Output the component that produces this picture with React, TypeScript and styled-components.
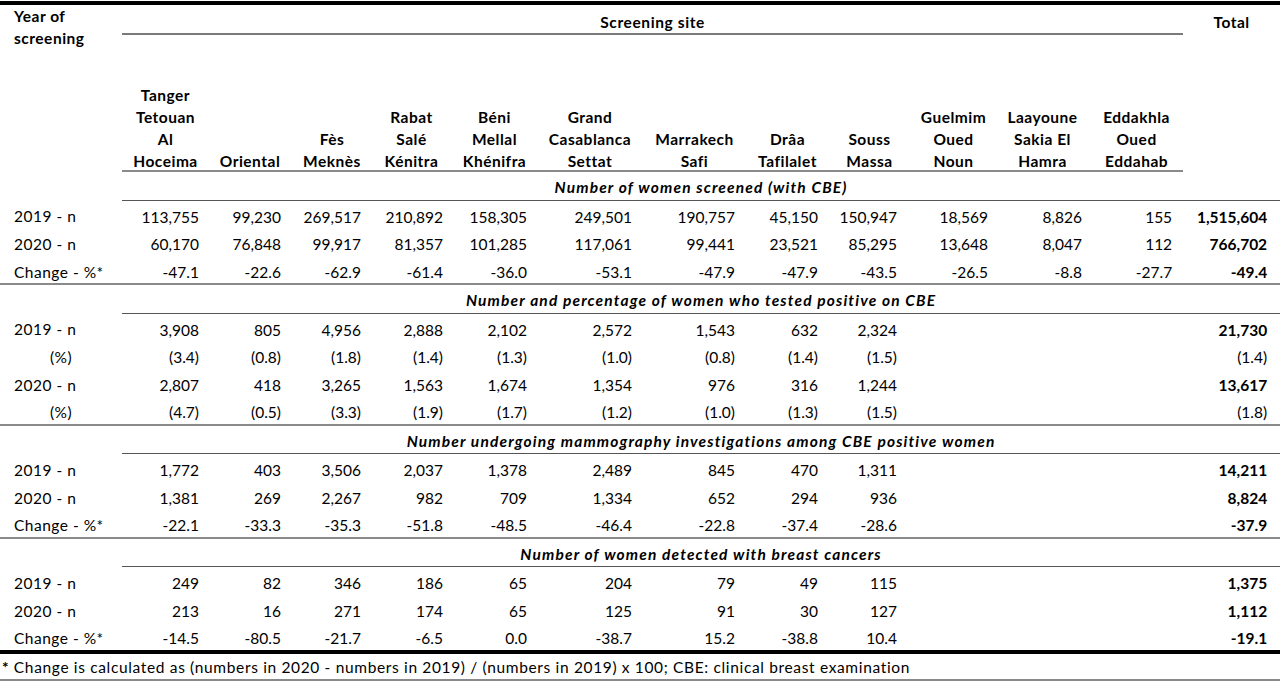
import React from 'react';
import styled, { createGlobalStyle, css } from 'styled-components';

const GlobalStyle = createGlobalStyle`
  html, body {
    margin: 0;
    padding: 0;
    background: #ffffff;
  }
  body {
    font-family: Lato, "Liberation Sans", sans-serif;
    color: #000000;
  }
`;

const Page = styled.div`
  width: 1280px;
  padding-top: 1px;
`;

const Table = styled.table`
  width: 1280px;
  border-collapse: collapse;
  table-layout: fixed;
  font-size: 15.5px;
  border-top: 4px solid #000000;
`;

type Rule = 'sep' | 'thick' | 'none';

const Row = styled.tr<{ $rule?: Rule }>`
  & > td,
  & > th {
    ${(p) =>
      p.$rule === 'sep'
        ? css`border-bottom: 2px solid #8a8a8a;`
        : p.$rule === 'thick'
        ? css`border-bottom: 4px solid #000000;`
        : ''}
  }
`;

const YearHead = styled.th`
  text-align: left;
  vertical-align: top;
  font-weight: 700;
  line-height: 22px;
  letter-spacing: 0.5px;
  padding: 0 0 0 14px;
`;

const SiteHead = styled.th`
  text-align: center;
  vertical-align: top;
  font-weight: 700;
  line-height: 22px;
  letter-spacing: 0.6px;
  padding: 6px 0 0;
  border-bottom: 2px solid #7a7a7a;
`;

const TotalHead = styled.th`
  text-align: center;
  vertical-align: top;
  font-weight: 700;
  line-height: 22px;
  letter-spacing: 0.5px;
  padding: 6px 0 0;
`;

const SiteName = styled.th`
  height: 135px;
  text-align: center;
  vertical-align: bottom;
  font-weight: 700;
  line-height: 22px;
  letter-spacing: 0.5px;
  padding: 0;
  white-space: nowrap;
`;

const NameStack = styled.div`
  margin-bottom: -2px;
`;

const LabelCell = styled.td<{ $center?: boolean }>`
  text-align: ${(p) => (p.$center ? 'center' : 'left')};
  padding: 5px 0 0 ${(p) => (p.$center ? '0' : '14px')};
  line-height: 22.5px;
  letter-spacing: 0.5px;
  white-space: nowrap;
`;

const NumCell = styled.td<{ $pad: number; $bold?: boolean }>`
  text-align: right;
  padding: 5px ${(p) => p.$pad}px 0 0;
  line-height: 22.5px;
  font-weight: ${(p) => (p.$bold ? 700 : 400)};
  white-space: nowrap;
`;

const BlankCell = styled.td`
  padding: 5px 0 0;
  line-height: 22.5px;
`;

const TitleCell = styled.td`
  text-align: center;
  font-weight: 700;
  font-style: italic;
  letter-spacing: 1.15px;
  padding: 4px 0 0;
  line-height: 23.5px;
  white-space: nowrap;
  border-bottom: 1px solid #555555;
`;

const NoteCell = styled.td`
  padding: 2px 0 0 2px;
  line-height: 23.5px;
  letter-spacing: 0.65px;
  border-bottom: 2px solid #8a8a8a;
  white-space: nowrap;
`;

const Star = styled.b`
  font-weight: 700;
`;

const sites = [
  { lines: ['Tanger', 'Tetouan', 'Al', 'Hoceima'], w: 87, pad: 10 },
  { lines: ['Oriental'], w: 82, pad: 10 },
  { lines: ['Fès', 'Meknès'], w: 82, pad: 12 },
  { lines: ['Rabat', 'Salé', 'Kénitra'], w: 77, pad: 7 },
  { lines: ['Béni', 'Mellal', 'Khénifra'], w: 89, pad: 12 },
  { lines: ['Grand', 'Casablanca', 'Settat'], w: 102, pad: 9 },
  { lines: ['Marrakech', 'Safi'], w: 107, pad: 13 },
  { lines: ['Drâa', 'Tafilalet'], w: 79, pad: 9 },
  { lines: ['Souss', 'Massa'], w: 85, pad: 15 },
  { lines: ['Guelmim', 'Oued', 'Noun'], w: 83, pad: 7 },
  { lines: ['Laayoune', 'Sakia El', 'Hamra'], w: 95, pad: 8 },
  { lines: ['Eddakhla', 'Oued', 'Eddahab'], w: 93, pad: 11 },
];

const TOTAL_W = 97;
const TOTAL_PAD = 13;

type DataRow = {
  label: string;
  vals: string[];
  total: string;
  pct?: boolean;
};

type Section = { title: string; rows: DataRow[] };

const sections: Section[] = [
  {
    title: 'Number of women screened (with CBE)',
    rows: [
      {
        label: '2019 - n',
        vals: ['113,755', '99,230', '269,517', '210,892', '158,305', '249,501', '190,757', '45,150', '150,947', '18,569', '8,826', '155'],
        total: '1,515,604',
      },
      {
        label: '2020 - n',
        vals: ['60,170', '76,848', '99,917', '81,357', '101,285', '117,061', '99,441', '23,521', '85,295', '13,648', '8,047', '112'],
        total: '766,702',
      },
      {
        label: 'Change - %*',
        vals: ['-47.1', '-22.6', '-62.9', '-61.4', '-36.0', '-53.1', '-47.9', '-47.9', '-43.5', '-26.5', '-8.8', '-27.7'],
        total: '-49.4',
      },
    ],
  },
  {
    title: 'Number and percentage of women who tested positive on CBE',
    rows: [
      {
        label: '2019 - n',
        vals: ['3,908', '805', '4,956', '2,888', '2,102', '2,572', '1,543', '632', '2,324'],
        total: '21,730',
      },
      {
        label: '(%)',
        vals: ['(3.4)', '(0.8)', '(1.8)', '(1.4)', '(1.3)', '(1.0)', '(0.8)', '(1.4)', '(1.5)'],
        total: '(1.4)',
        pct: true,
      },
      {
        label: '2020 - n',
        vals: ['2,807', '418', '3,265', '1,563', '1,674', '1,354', '976', '316', '1,244'],
        total: '13,617',
      },
      {
        label: '(%)',
        vals: ['(4.7)', '(0.5)', '(3.3)', '(1.9)', '(1.7)', '(1.2)', '(1.0)', '(1.3)', '(1.5)'],
        total: '(1.8)',
        pct: true,
      },
    ],
  },
  {
    title: 'Number undergoing mammography investigations among CBE positive women',
    rows: [
      {
        label: '2019 - n',
        vals: ['1,772', '403', '3,506', '2,037', '1,378', '2,489', '845', '470', '1,311'],
        total: '14,211',
      },
      {
        label: '2020 - n',
        vals: ['1,381', '269', '2,267', '982', '709', '1,334', '652', '294', '936'],
        total: '8,824',
      },
      {
        label: 'Change - %*',
        vals: ['-22.1', '-33.3', '-35.3', '-51.8', '-48.5', '-46.4', '-22.8', '-37.4', '-28.6'],
        total: '-37.9',
      },
    ],
  },
  {
    title: 'Number of women detected with breast cancers',
    rows: [
      {
        label: '2019 - n',
        vals: ['249', '82', '346', '186', '65', '204', '79', '49', '115'],
        total: '1,375',
      },
      {
        label: '2020 - n',
        vals: ['213', '16', '271', '174', '65', '125', '91', '30', '127'],
        total: '1,112',
      },
      {
        label: 'Change - %*',
        vals: ['-14.5', '-80.5', '-21.7', '-6.5', '0.0', '-38.7', '15.2', '-38.8', '10.4'],
        total: '-19.1',
      },
    ],
  },
];

const App: React.FC = () => {
  return (
    <Page>
      <GlobalStyle />
      <Table>
        <colgroup>
          <col style={{ width: 122 }} />
          {sites.map((s, i) => (
            <col key={i} style={{ width: s.w }} />
          ))}
          <col style={{ width: TOTAL_W }} />
        </colgroup>
        <thead>
          <tr>
            <YearHead rowSpan={2}>
              Year of
              <br />
              screening
            </YearHead>
            <SiteHead colSpan={12}>Screening site</SiteHead>
            <TotalHead rowSpan={2}>Total</TotalHead>
          </tr>
          <Row $rule="sep">
            {sites.map((s, i) => (
              <SiteName key={i}>
                <NameStack>
                  {s.lines.map((l, j) => (
                    <React.Fragment key={j}>
                      {j > 0 && <br />}
                      {l}
                    </React.Fragment>
                  ))}
                </NameStack>
              </SiteName>
            ))}
          </Row>
        </thead>
        <tbody>
          {sections.map((sec, si) => (
            <React.Fragment key={si}>
              <tr>
                <BlankCell />
                <TitleCell colSpan={13}>{sec.title}</TitleCell>
              </tr>
              {sec.rows.map((r, ri) => {
                const last = ri === sec.rows.length - 1;
                const rule: Rule = last ? (si === sections.length - 1 ? 'thick' : 'sep') : 'none';
                return (
                  <Row key={ri} $rule={rule}>
                    <LabelCell $center={r.pct}>{r.label}</LabelCell>
                    {sites.map((s, ci) =>
                      r.vals[ci] ? (
                        <NumCell key={ci} $pad={s.pad}>
                          {r.vals[ci]}
                        </NumCell>
                      ) : (
                        <BlankCell key={ci} />
                      )
                    )}
                    <NumCell $pad={TOTAL_PAD} $bold={!r.pct}>
                      {r.total}
                    </NumCell>
                  </Row>
                );
              })}
            </React.Fragment>
          ))}
          <tr>
            <NoteCell colSpan={14}>
              <Star>*</Star> Change is calculated as (numbers in 2020 - numbers in 2019) / (numbers in 2019) x 100; CBE: clinical breast examination
            </NoteCell>
          </tr>
        </tbody>
      </Table>
    </Page>
  );
};

export default App;
